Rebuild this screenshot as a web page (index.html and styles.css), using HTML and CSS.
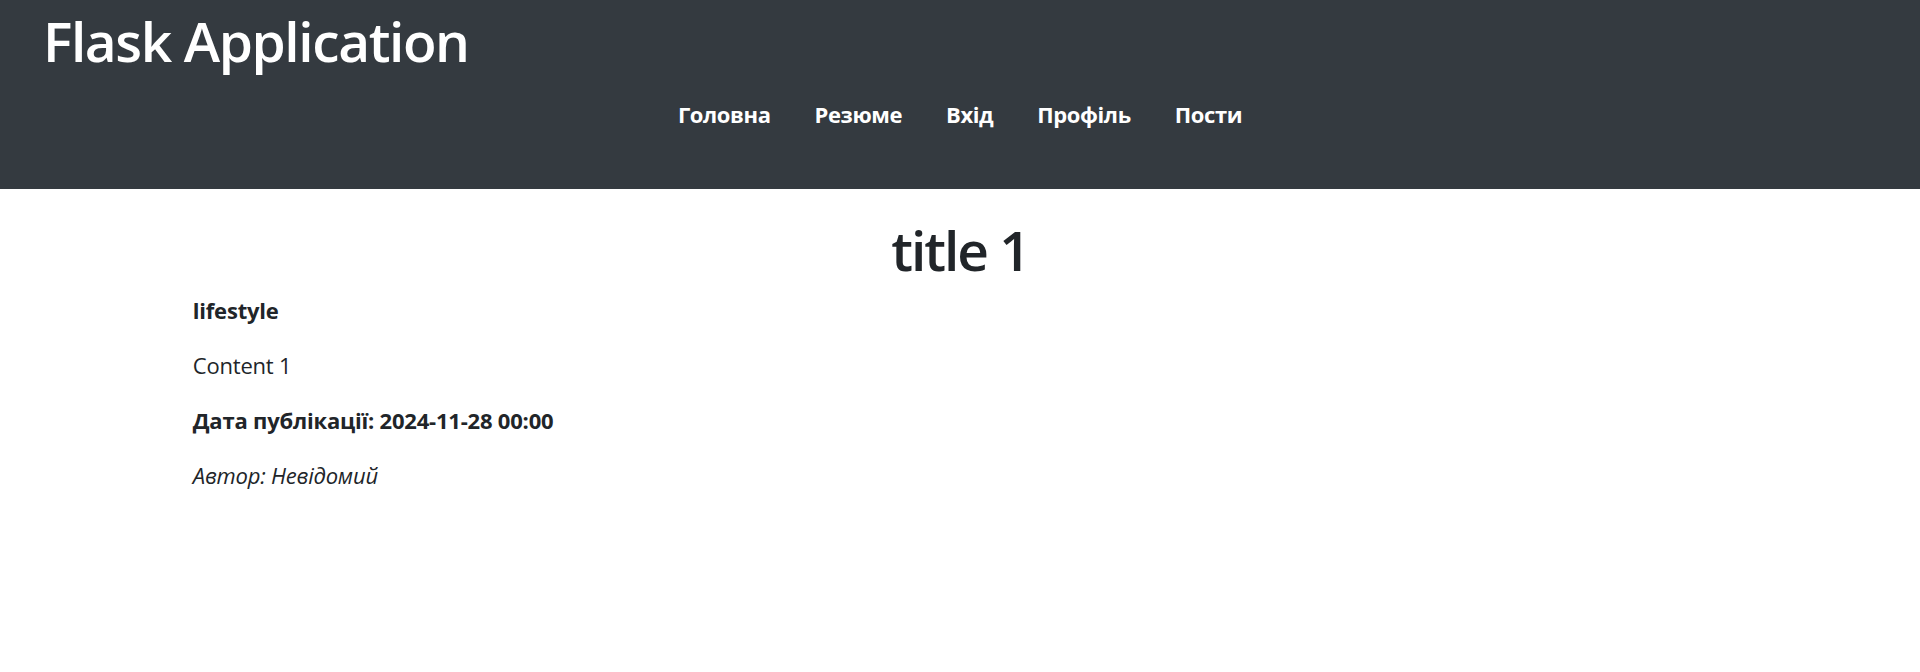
FILE: index.html
```html
<!DOCTYPE html>
<html lang="uk">
<head>
<meta charset="utf-8">
<title>title 1</title>
<link rel="stylesheet" href="styles.css">
</head>
<body>
<header class="site-header">
  <h1 class="brand">Flask Application</h1>
  <nav class="main-nav">
    <a class="nav-link" href="#">Головна</a>
    <a class="nav-link" href="#">Резюме</a>
    <a class="nav-link" href="#">Вхід</a>
    <a class="nav-link" href="#">Профіль</a>
    <a class="nav-link" href="#">Пости</a>
  </nav>
</header>
<main class="container">
  <h1 class="post-title">title 1</h1>
  <p class="post-category">lifestyle</p>
  <p class="post-content">Content 1</p>
  <p class="post-date">Дата публікації: 2024-11-28 00:00</p>
  <p class="post-author">Автор: Невідомий</p>
</main>
</body>
</html>
```

FILE: styles.css
```css
* { box-sizing: border-box; }

html, body {
  margin: 0;
  padding: 0;
}

body {
  font-family: "Open Sans", "Noto Sans", sans-serif;
  font-size: 22px;
  line-height: 1.5;
  color: #212529;
  background: #ffffff;
}

.site-header {
  background: #343a40;
  color: #ffffff;
  height: 189px;
  padding: 8px 0 0 43px;
}

.brand {
  margin: 0 0 11px;
  font-size: 55px;
  font-weight: 600;
  line-height: 1.2;
  letter-spacing: -1.4px;
}

.main-nav {
  display: flex;
  justify-content: center;
  padding-top: 2px;
  margin-left: -43px;
}

.nav-link {
  display: block;
  padding: 11px 22px;
  color: #ffffff;
  font-weight: 700;
  letter-spacing: -0.4px;
  text-decoration: none;
}

.container {
  width: 100%;
  max-width: 1567.5px;
  margin: 0 auto;
  padding: 0 16.5px;
}

.post-title {
  margin: 28px 0 11px;
  font-size: 55px;
  font-weight: 600;
  line-height: 1.2;
  letter-spacing: -2px;
  text-align: center;
}

.container p {
  margin: 0 0 22px;
  letter-spacing: -0.2px;
}

.post-category,
.post-date {
  font-weight: 700;
}

.post-author {
  font-style: italic;
}
```
